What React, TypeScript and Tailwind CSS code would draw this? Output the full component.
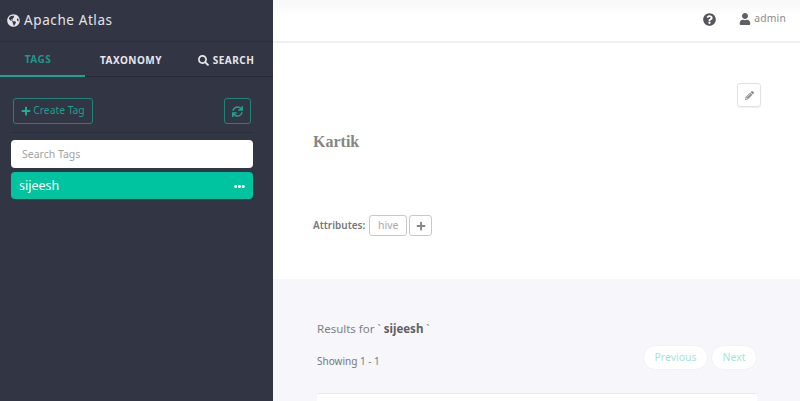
import { FaEllipsisH, FaGlobeAmericas, FaPencilAlt, FaPlus, FaQuestionCircle, FaSearch, FaSync, FaUser } from "react-icons/fa";

const Sidebar = () => {
  return (
    <aside className="w-[273px] shrink-0 h-full bg-[#323544] flex flex-col">
      <div className="h-[42px] shrink-0 flex items-center pl-[7px] gap-[4px] text-[#e4e4e8] border-b border-[#2b2e3b]">
        <FaGlobeAmericas className="text-[13px]" />
        <span className="text-[13.5px] tracking-[0.6px] leading-none">Apache Atlas</span>
      </div>

      <div className="h-[35px] shrink-0 flex border-b border-[#262935] text-[10px] font-bold tracking-[0.5px] text-[#e6e6ea]">
        <div className="w-[85px] flex items-center justify-center pr-[9px] pt-[2px] text-[#1b9a8a] border-b-2 border-[#1fa391] h-[35px]">TAGS</div>
        <div className="w-[92px] flex items-center justify-center pt-[2px]">TAXONOMY</div>
        <div className="flex-1 flex items-center justify-center gap-[4px] pt-[2px] pl-[2px]">
          <FaSearch className="text-[11px]" />
          SEARCH
        </div>
      </div>

      <div className="pl-[11px] pr-[20px]">
        <div className="flex justify-between items-center mt-[21px] pl-[2px] pr-[2px] pb-[8px] border-b border-[#2b2e3b]">
          <button className="h-[26px] w-[80px] flex items-center justify-center gap-[2px] rounded-[3px] border border-[#1f8579] text-[#1c9f8e] text-[10.3px]">
            <FaPlus className="text-[10px] text-[#1fb09c]" />
            Create Tag
          </button>
          <button className="h-[26px] w-[27px] flex items-center justify-center rounded-[3px] border border-[#1f8579] text-[#1fa391]">
            <FaSync className="text-[11px]" />
          </button>
        </div>

        <div className="mt-[7px] h-[28px] bg-white rounded-[4px] flex items-center pl-[11px] pt-[2px] text-[10.5px] text-[#a3a3a3]">
          Search Tags
        </div>
        <div className="mt-[4px] h-[27px] bg-[#00c3a0] rounded-[4px] flex items-center justify-between pl-[8px] pr-[8px] pt-[1px] text-white text-[12.5px]">
          sijeesh
          <FaEllipsisH className="text-[11px]" />
        </div>
      </div>
    </aside>
  );
};

const Header = () => {
  return (
    <header className="h-[43px] shrink-0 bg-gradient-to-b from-[#f8f8f8] to-white to-40% border-b-2 border-[#eff0f3] flex items-center justify-end pr-[14px] pb-[3px]">
      <FaQuestionCircle className="text-[13px] text-[#55565d] mr-[23px]" />
      <FaUser className="text-[12px] text-[#5f6066] mr-[3px]" />
      <span className="text-[10.3px] tracking-[0.2px] text-[#8a8a8e]">admin</span>
    </header>
  );
};

const TagDetail = () => {
  return (
    <section className="h-[236px] shrink-0 bg-white flex flex-col pl-[40px] pr-[39px]">
      <div className="flex justify-end mt-[40px]">
        <button className="w-[24px] h-[24px] flex items-center justify-center rounded-[3px] border border-[#e2e2e2] text-[#8e8e8e] shadow-[0_1px_1px_#f0f0f0]">
          <FaPencilAlt className="text-[9px]" />
        </button>
      </div>
      <h1 className="mt-[25px] text-[16px] leading-[20px] font-bold text-[#858585] [font-family:'Liberation_Serif',serif]">Kartik</h1>
      <div className="mt-[63px] flex items-center text-[10px]">
        <span className="font-semibold text-[#77777b] mr-[4px]">Attributes:</span>
        <span className="h-[21px] w-[38px] flex items-center justify-center rounded-[3px] border border-[#c9c9c9] text-[#a9a9a9] text-[10.5px] mr-[2px]">hive</span>
        <span className="h-[21px] w-[23px] flex items-center justify-center rounded-[3px] border border-[#c9c9c9] text-[#85858a]">
          <FaPlus className="text-[10px]" />
        </span>
      </div>
    </section>
  );
};

const Results = () => {
  return (
    <section className="flex-1 bg-[#f6f6fb] pl-[44px] pr-[43px] pt-[41px] flex flex-col">
      <p className="text-[11.5px] leading-[18px] text-[#818188]">
        Results for ` <b className="font-bold text-[#5f5f66]">sijeesh</b> `
      </p>
      <div className="mt-[7px] flex items-center justify-between">
        <span className="text-[10px] text-[#76767c] mt-[7px]">Showing 1 - 1</span>
        <div className="flex gap-[3px] text-[10.5px] text-[#a5e6da]">
          <span className="w-[65px] h-[25px] flex items-center justify-center rounded-full bg-white border border-[#f2f2f6]">Previous</span>
          <span className="w-[46px] h-[25px] flex items-center justify-center rounded-full bg-white border border-[#f2f2f6]">Next</span>
        </div>
      </div>
      <div className="mt-[23px] flex-1 bg-white border-t border-[#e8e8ec] rounded-t-[2px]" />
    </section>
  );
};

const App = () => {
  return (
    <div className="w-[800px] h-[401px] flex overflow-hidden bg-white [font-family:'Noto_Sans',sans-serif]">
      <Sidebar />
      <main className="flex-1 flex flex-col min-w-0">
        <Header />
        <TagDetail />
        <Results />
      </main>
    </div>
  );
};

export default App;
